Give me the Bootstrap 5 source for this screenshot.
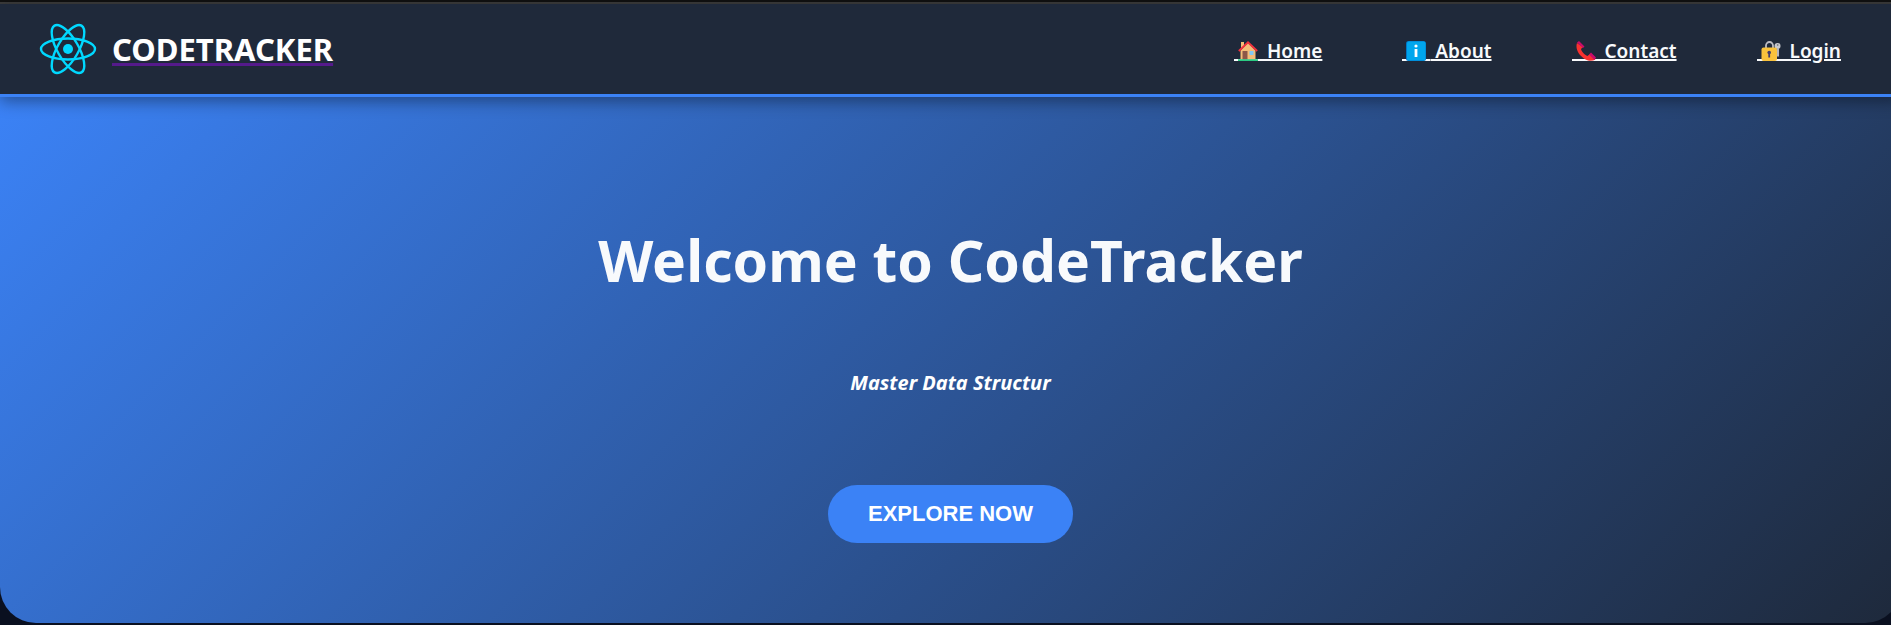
<!DOCTYPE html>
<html lang="en">
<head>
<meta charset="utf-8">
<meta name="viewport" content="width=device-width, initial-scale=1">
<title>CodeTracker</title>
<link href="https://cdn.jsdelivr.net/npm/bootstrap@5.3.0/dist/css/bootstrap.min.css" rel="stylesheet">
<style>
  body { background: #0a1020; font-family: "Noto Sans", "Open Sans", sans-serif; overflow-x: hidden; }
  .page-shell { margin-right: -10px; }
  .top-strip { height: 4px; background: #111; border-bottom: 2px solid #3c3c3c; }
  .site-nav { background: #1f293a; border-bottom: 3px solid #3b82f6; box-shadow: 0 4px 15px rgba(0,0,0,.4); padding: 16px 60px 16px 32px; z-index: 2; }
  .brand-link { color: #fff; font-size: 31px; line-height: 40px; font-weight: 700; text-decoration: underline 3px #551a8b; text-underline-offset: 2px; text-decoration-skip-ink: none; }
  .brand-link:hover { color: #fff; }
  .brand-logo { width: 72px; height: 58px; }
  .site-links { gap: 80px; }
  .site-links a { color: #f8fafc; font-size: 19px; line-height: 28px; font-weight: 600; white-space: nowrap; text-decoration: underline 2px; text-underline-offset: 1px; }
  .link-icon { display: inline-block; width: 28px; height: 20px; padding-left: 4px; vertical-align: -3px; background: linear-gradient(#f8fafc, #f8fafc) bottom / 100% 2px no-repeat; }
  .link-icon svg { display: block; width: 20px; height: 20px; }
  .hero { background: linear-gradient(135deg, #3b82f6, #1e293b); border-radius: 0 0 36px 36px; padding: 120px 20px 80px; }
  .hero h1 { color: #f8fafc; font-size: 57px; line-height: 86px; font-weight: 700; margin-bottom: 66px; }
  .hero-tagline { color: #fff; font-size: 20px; line-height: 28px; font-weight: 700; font-style: italic; margin-bottom: 88px; }
  .explore-btn { background: #3b82f6; color: #fff; border: 0; border-radius: 30px; padding: 16px 40px; font: 700 22px/26px "Liberation Sans", Arial, sans-serif; }
  .explore-btn:hover { background: #2563eb; color: #fff; }
</style>
</head>
<body>
<div class="page-shell">
  <div class="top-strip"></div>
  <header class="site-nav d-flex align-items-center justify-content-between position-relative">
    <div class="d-flex align-items-center gap-2">
      <svg class="brand-logo" viewBox="-36 -29 72 58" aria-hidden="true">
        <circle r="5" fill="#00d8ff"/>
        <g fill="none" stroke="#00d8ff" stroke-width="2.4">
          <ellipse rx="27" ry="10.5"/>
          <ellipse rx="27" ry="10.5" transform="rotate(60)"/>
          <ellipse rx="27" ry="10.5" transform="rotate(120)"/>
        </g>
      </svg>
      <a class="brand-link" href="#">CODETRACKER</a>
    </div>
    <nav class="pt-1">
      <ul class="site-links list-unstyled d-flex mb-0">
        <li><a href="#"><span class="link-icon"><svg viewBox="0 0 20 20" aria-hidden="true"><path fill="#f5bd78" d="M3 1h3v6H3zM10 2 2.500 9.500V18.500h15V9.500z"/><path fill="#8d5748" d="M4.500 10h5v8.500h-5z"/><path fill="#83c8f5" d="M11.500 10h4v4h-4z"/><path fill="none" stroke="#f5323d" stroke-width="1.800" d="M.8 10 10 1.300 19.200 10"/><path fill="#2bcb83" d="M0 18.200h20V20H0z"/></svg></span>&nbsp;Home</a></li>
        <li><a href="#"><span class="link-icon"><svg viewBox="0 0 20 20" aria-hidden="true"><rect width="20" height="20" rx="2.500" fill="#0078c8"/><rect x="1" y="0.500" width="18.500" height="19" rx="2" fill="#00a6ed"/><circle cx="10" cy="5" r="1.600" fill="#fff"/><path fill="#fff" d="M8.600 8h2.800v8H8.600z"/></svg></span>&nbsp;About</a></li>
        <li><a href="#"><span class="link-icon"><svg viewBox="0 0 20 20" aria-hidden="true"><path fill="#f8312f" d="M1 2C-1 8 3 14 8 17.500c4 2.800 8 3 11.500 1L14 13l-2.500 2C8.500 14 5.500 10.500 5 8l2-2z"/><path fill="#ca0b6a" d="m1 1.500 2-1.500 5.500 5.500L7 7zM13 13.500l2-2 5 5-1.500 2.500z"/></svg></span>&nbsp;Contact</a></li>
        <li><a href="#"><span class="link-icon"><svg viewBox="0 0 20 20" aria-hidden="true"><path fill="none" stroke="#bcbcc2" stroke-width="1.800" d="M5 8V4.500a3.500 3.500 0 0 1 7 0V8"/><circle cx="16.500" cy="5" r="3" fill="#c8c8cd"/><circle cx="16.700" cy="4" r=".8" fill="#59606c"/><path fill="#b5b5bc" d="M15.500 7h2.500v8.500h-2.500z"/><rect x=".5" y="6.500" width="15.500" height="13.500" rx="2" fill="#f9c23c"/><circle cx="8.200" cy="11.500" r="1.800" fill="#433b6b"/><path fill="#433b6b" d="M7.300 12h1.800v4.500H7.300z"/></svg></span>&nbsp;Login</a></li>
      </ul>
    </nav>
  </header>
  <main class="hero text-center">
    <h1>Welcome to CodeTracker</h1>
    <p class="hero-tagline">Master Data Structur</p>
    <button type="button" class="explore-btn btn">EXPLORE NOW</button>
  </main>
</div>
<script src="https://cdn.jsdelivr.net/npm/bootstrap@5.3.0/dist/js/bootstrap.bundle.min.js"></script>
</body>
</html>
